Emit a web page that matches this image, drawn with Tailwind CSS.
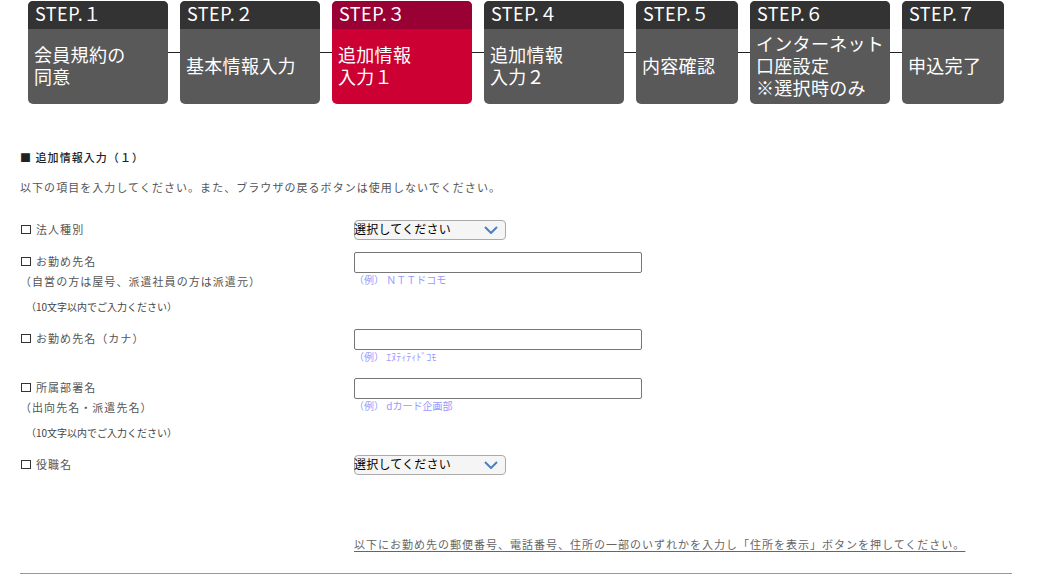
<!DOCTYPE html>
<html lang="ja">
<head>
    <meta charset="UTF-8">
    <meta name="viewport" content="width=device-width, initial-scale=1.0">
    <title>追加情報入力</title>
    <script src="https://cdn.jsdelivr.net/npm/@tailwindcss/browser@4"></script>
</head>
<body class="bg-white h-[577px] overflow-hidden font-['Noto_Sans_CJK_JP','Noto_Sans',sans-serif] text-[#333]">
    <!-- ステップ表示 -->
    <div class="flex pl-[28px] pt-px text-white">
        <div class="w-[140px] h-[103px] rounded-[5px] overflow-hidden bg-[#595959]">
            <div class="h-[28px] bg-[#333] pl-[7px] text-[18px] tracking-[0.5px] leading-[25px]">STEP.１</div>
            <div class="h-[75px] flex items-center pl-[6px] pb-[4px] whitespace-nowrap text-[18px] tracking-[0.3px] leading-[22px]"><p>会員規約の<br>同意</p></div>
        </div>
        <div class="w-[12px] h-px bg-[#222] mt-[51px]"></div>
        <div class="w-[140px] h-[103px] rounded-[5px] overflow-hidden bg-[#595959]">
            <div class="h-[28px] bg-[#333] pl-[7px] text-[18px] tracking-[0.5px] leading-[25px]">STEP.２</div>
            <div class="h-[75px] flex items-center pl-[6px] pb-[4px] whitespace-nowrap text-[18px] tracking-[0.3px] leading-[22px]"><p>基本情報入力</p></div>
        </div>
        <div class="w-[12px] h-px bg-[#222] mt-[51px]"></div>
        <div class="w-[140px] h-[103px] rounded-[5px] overflow-hidden bg-[#cc0033]">
            <div class="h-[28px] bg-[#990033] pl-[7px] text-[18px] tracking-[0.5px] leading-[25px]">STEP.３</div>
            <div class="h-[75px] flex items-center pl-[6px] pb-[4px] whitespace-nowrap text-[18px] tracking-[0.3px] leading-[22px]"><p>追加情報<br>入力１</p></div>
        </div>
        <div class="w-[12px] h-px bg-[#222] mt-[51px]"></div>
        <div class="w-[140px] h-[103px] rounded-[5px] overflow-hidden bg-[#595959]">
            <div class="h-[28px] bg-[#333] pl-[7px] text-[18px] tracking-[0.5px] leading-[25px]">STEP.４</div>
            <div class="h-[75px] flex items-center pl-[6px] pb-[4px] whitespace-nowrap text-[18px] tracking-[0.3px] leading-[22px]"><p>追加情報<br>入力２</p></div>
        </div>
        <div class="w-[12px] h-px bg-[#222] mt-[51px]"></div>
        <div class="w-[102px] h-[103px] rounded-[5px] overflow-hidden bg-[#595959]">
            <div class="h-[28px] bg-[#333] pl-[7px] text-[18px] tracking-[0.5px] leading-[25px]">STEP.５</div>
            <div class="h-[75px] flex items-center pl-[6px] pb-[4px] whitespace-nowrap text-[18px] tracking-[0.3px] leading-[22px]"><p>内容確認</p></div>
        </div>
        <div class="w-[12px] h-px bg-[#222] mt-[51px]"></div>
        <div class="w-[140px] h-[103px] rounded-[5px] overflow-hidden bg-[#595959]">
            <div class="h-[28px] bg-[#333] pl-[7px] text-[18px] tracking-[0.5px] leading-[25px]">STEP.６</div>
            <div class="h-[75px] flex items-center pl-[6px] pb-[4px] whitespace-nowrap text-[18px] tracking-[0.3px] leading-[22px]"><p>インターネット<br>口座設定<br>※選択時のみ</p></div>
        </div>
        <div class="w-[12px] h-px bg-[#222] mt-[51px]"></div>
        <div class="w-[102px] h-[103px] rounded-[5px] overflow-hidden bg-[#595959]">
            <div class="h-[28px] bg-[#333] pl-[7px] text-[18px] tracking-[0.5px] leading-[25px]">STEP.７</div>
            <div class="h-[75px] flex items-center pl-[6px] pb-[4px] whitespace-nowrap text-[18px] tracking-[0.3px] leading-[22px]"><p>申込完了</p></div>
        </div>
    </div>

    <div class="pl-[20px] w-[1012px] text-[11px] tracking-[1.05px] leading-[20px]">
        <h2 class="mt-[43px] font-medium text-[#222]">■ 追加情報入力（１）</h2>
        <p class="mt-[10px] text-[#555]">以下の項目を入力してください。また、ブラウザの戻るボタンは使用しないでください。</p>

        <!-- 入力フォーム -->
        <div class="mt-[22px] grid grid-cols-[334px_1fr] text-[#555]">
            <div class="h-[32px]"><span class="inline-block w-[10px] h-[9px] border border-[#333] ml-px mr-[5px]"></span>法人種別</div>
            <div class="pt-px">
                <button class="w-[152px] h-[20px] flex items-center justify-between pr-[7px] bg-[#f5f5f5] border border-[#aaa] rounded-[4px] text-[12px] text-black tracking-[0.2px] leading-none">
                    <span class="-ml-px pb-[2px]">選択してください</span>
                    <svg width="14" height="8" viewBox="0 0 14 8" fill="none" stroke="#4a7fc1" stroke-width="2"><path d="M1 1l6 6 6-6"/></svg>
                </button>
            </div>

            <div class="h-[77px]">
                <p><span class="inline-block w-[10px] h-[9px] border border-[#333] ml-px mr-[5px]"></span>お勤め先名</p>
                <p>（自営の方は屋号、派遣社員の方は派遣元）</p>
                <p class="pl-[6px] mt-[6px] text-[10px] tracking-normal text-[#444]">（10文字以内でご入力ください）</p>
            </div>
            <div class="pt-px">
                <div class="w-[288px] h-[21px] border border-[#767676] rounded-[2px] bg-white"></div>
                <p class="text-[10px] leading-[14px] tracking-normal text-[#9999ff]">（例） ＮＴＴドコモ</p>
            </div>

            <div class="h-[49px]"><span class="inline-block w-[10px] h-[9px] border border-[#333] ml-px mr-[5px]"></span>お勤め先名（カナ）</div>
            <div class="pt-px">
                <div class="w-[288px] h-[21px] border border-[#767676] rounded-[2px] bg-white"></div>
                <p class="text-[10px] leading-[14px] tracking-normal text-[#9999ff]">（例） ｴﾇﾃｨﾃｨﾄﾞｺﾓ</p>
            </div>

            <div class="h-[77px]">
                <p><span class="inline-block w-[10px] h-[9px] border border-[#333] ml-px mr-[5px]"></span>所属部署名</p>
                <p>（出向先名・派遣先名）</p>
                <p class="pl-[6px] mt-[6px] text-[10px] tracking-normal text-[#444]">（10文字以内でご入力ください）</p>
            </div>
            <div class="pt-px">
                <div class="w-[288px] h-[21px] border border-[#767676] rounded-[2px] bg-white"></div>
                <p class="text-[10px] leading-[14px] tracking-normal text-[#9999ff]">（例） dカード企画部</p>
            </div>

            <div class="h-[80px]"><span class="inline-block w-[10px] h-[9px] border border-[#333] ml-px mr-[5px]"></span>役職名</div>
            <div class="pt-px">
                <button class="w-[152px] h-[20px] flex items-center justify-between pr-[7px] bg-[#f5f5f5] border border-[#aaa] rounded-[4px] text-[12px] text-black tracking-[0.2px] leading-none">
                    <span class="-ml-px pb-[2px]">選択してください</span>
                    <svg width="14" height="8" viewBox="0 0 14 8" fill="none" stroke="#4a7fc1" stroke-width="2"><path d="M1 1l6 6 6-6"/></svg>
                </button>
            </div>

            <div></div>
            <p class="underline underline-offset-2 text-[#666] tracking-[1px]">以下にお勤め先の郵便番号、電話番号、住所の一部のいずれかを入力し「住所を表示」ボタンを押してください。</p>
        </div>
        <div class="mt-[19px] border-t border-[#999]"></div>
    </div>
</body>
</html>
